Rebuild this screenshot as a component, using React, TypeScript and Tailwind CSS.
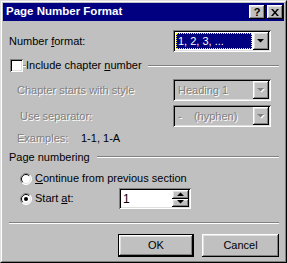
const raised =
  "shadow-[inset_-1px_-1px_0_#000000,inset_1px_1px_0_#ffffff,inset_-2px_-2px_0_#808080,inset_2px_2px_0_#dfdfdf]";
const sunken =
  "shadow-[inset_1px_1px_0_#808080,inset_-1px_-1px_0_#ffffff,inset_2px_2px_0_#000000,inset_-2px_-2px_0_#dfdfdf]";
const dim = "text-[#808080] [text-shadow:1px_1px_0_#ffffff]";

function Arrow({ disabled, up }: { disabled?: boolean; up?: boolean }) {
  const pts = up ? "0,4 7,4 3.5,0.5" : "0,0 7,0 3.5,3.5";
  return (
    <svg width="8" height="5" viewBox="0 0 8 5" className="block">
      {disabled && <polygon points={pts} fill="#ffffff" transform="translate(1 1)" />}
      <polygon points={pts} fill={disabled ? "#808080" : "#000000"} />
    </svg>
  );
}

function Combo({ value, disabled, focused }: { value: React.ReactNode; disabled?: boolean; focused?: boolean }) {
  return (
    <div className={`w-[98px] h-[22px] flex p-[2px] ${sunken} ${disabled ? "bg-[#c0c0c0]" : "bg-white"}`}>
      <div className="flex-1 flex items-center pl-[1px] pr-[1px]">
        {focused ? (
          <div className="w-full h-[16px] bg-[#000080] text-white flex items-center pl-[2px] outline-1 outline-dotted outline-[#ffff00] -outline-offset-1">
            {value}
          </div>
        ) : (
          <div className={`pl-[2px] ${disabled ? dim : ""}`}>{value}</div>
        )}
      </div>
      <div className={`w-[16px] h-[18px] bg-[#c0c0c0] flex items-center justify-center ${raised}`}>
        <Arrow disabled={disabled} />
      </div>
    </div>
  );
}

function Radio({ checked }: { checked?: boolean }) {
  return (
    <svg width="12" height="12" viewBox="0 0 12 12" className="block shrink-0">
      <circle cx="6" cy="6" r="5.5" fill="#ffffff" />
      <path d="M2.1 9.9 A5.5 5.5 0 0 1 9.9 2.1" stroke="#808080" fill="none" />
      <path d="M9.9 2.1 A5.5 5.5 0 0 1 2.1 9.9" stroke="#ffffff" fill="none" />
      <path d="M2.8 9.2 A4.5 4.5 0 0 1 9.2 2.8" stroke="#000000" fill="none" />
      <path d="M9.2 2.8 A4.5 4.5 0 0 1 2.8 9.2" stroke="#dfdfdf" fill="none" />
      {checked && <circle cx="6" cy="6" r="2" fill="#000000" />}
    </svg>
  );
}

function Etched() {
  return <div className="flex-1 h-[2px] border-t border-t-[#808080] border-b border-b-white" />;
}

function TitleButton({ children }: { children: React.ReactNode }) {
  return (
    <div className={`w-[16px] h-[14px] bg-[#c0c0c0] flex items-center justify-center ${raised}`}>{children}</div>
  );
}

export default function App() {
  return (
    <div className="w-[287px] h-[263px] bg-[#c0c0c0] border border-t-[#dfdfdf] border-l-[#dfdfdf] border-r-black border-b-black font-['Liberation_Sans',Arial,sans-serif] text-[11px] text-black leading-none select-none">
      <div className="h-full border border-t-white border-l-white border-r-[#808080] border-b-[#808080] p-[1px] flex flex-col">
        {/* title bar */}
        <div className="h-[18px] bg-[#000080] flex items-center pl-[3px] pr-[1px]">
          <span className="text-white font-bold text-[11.5px]">Page Number Format</span>
          <div className="ml-auto flex gap-[2px]">
            <TitleButton>
              <span className="font-bold text-[11px] mt-[1px]">?</span>
            </TitleButton>
            <TitleButton>
              <svg width="8" height="7" viewBox="0 0 8 7">
                <path d="M0 0h2l2 2.5L6 0h2L5 3.5 8 7H6L4 4.5 2 7H0l3-3.5z" fill="#000" />
              </svg>
            </TitleButton>
          </div>
        </div>

        <div className="flex flex-col pl-[6px] pr-[5px]">
          {/* number format */}
          <div className="mt-[9px] h-[22px] flex items-center">
            <span className="w-[164px]">
              Number <u>f</u>ormat:
            </span>
            <Combo value="1, 2, 3, ..." focused />
          </div>

          {/* include chapter number */}
          <div className="mt-[7px] h-[13px] flex items-center">
            <div className={`ml-[1px] w-[13px] h-[13px] bg-white ${sunken}`} />
            <div className="w-[3px] h-[2px] border-t border-t-[#808080] border-b border-b-white" />
            <span className="mr-[6px]">
              Include chapter <u>n</u>umber
            </span>
            <Etched />
          </div>

          <div className="mt-[7px] h-[22px] flex items-center">
            <span className={`w-[164px] pl-[8px] ${dim}`}>Chapter starts with style</span>
            <Combo value="Heading 1" disabled />
          </div>

          <div className="mt-[4px] h-[22px] flex items-center">
            <span className={`w-[164px] pl-[11px] ${dim}`}>Use separator:</span>
            <Combo
              value={
                <span className="whitespace-pre">
                  -{"    "}(hyphen)
                </span>
              }
              disabled
            />
          </div>

          <div className="mt-[5px] h-[12px] flex items-center pl-[8px]">
            <span className={`w-[64px] ${dim}`}>Examples:</span>
            <span>1-1, 1-A</span>
          </div>

          {/* page numbering */}
          <div className="mt-[7px] h-[12px] flex items-center">
            <span className="mr-[7px]">Page numbering</span>
            <Etched />
          </div>

          <div className="mt-[9px] h-[13px] flex items-center pl-[11px] gap-[3px]">
            <Radio />
            <span>
              <u>C</u>ontinue from previous section
            </span>
          </div>

          <div className="mt-[3px] h-[21px] flex items-center pl-[11px]">
            <Radio checked />
            <span className="ml-[3px] w-[84px]">
              Start <u>a</u>t:
            </span>
            <div className={`w-[72px] h-[21px] bg-white flex p-[2px] ${sunken}`}>
              <span className="flex-1 flex items-center pl-[2px] text-[12px]">1</span>
              <div className="w-[17px] flex flex-col">
                <div className={`flex-1 bg-[#c0c0c0] flex items-center justify-center ${raised}`}>
                  <Arrow up />
                </div>
                <div className={`flex-1 bg-[#c0c0c0] flex items-center justify-center ${raised}`}>
                  <Arrow />
                </div>
              </div>
            </div>
          </div>

          <div className="mt-[13px] flex">
            <Etched />
          </div>

          {/* buttons */}
          <div className="mt-[10px] flex justify-end gap-[8px]">
            <div className="w-[76px] h-[23px] border border-black">
              <div className={`h-full bg-[#c0c0c0] flex items-center justify-center ${raised}`}>OK</div>
            </div>
            <div className={`w-[77px] h-[23px] bg-[#c0c0c0] flex items-center justify-center ${raised}`}>Cancel</div>
          </div>
        </div>
      </div>
    </div>
  );
}
